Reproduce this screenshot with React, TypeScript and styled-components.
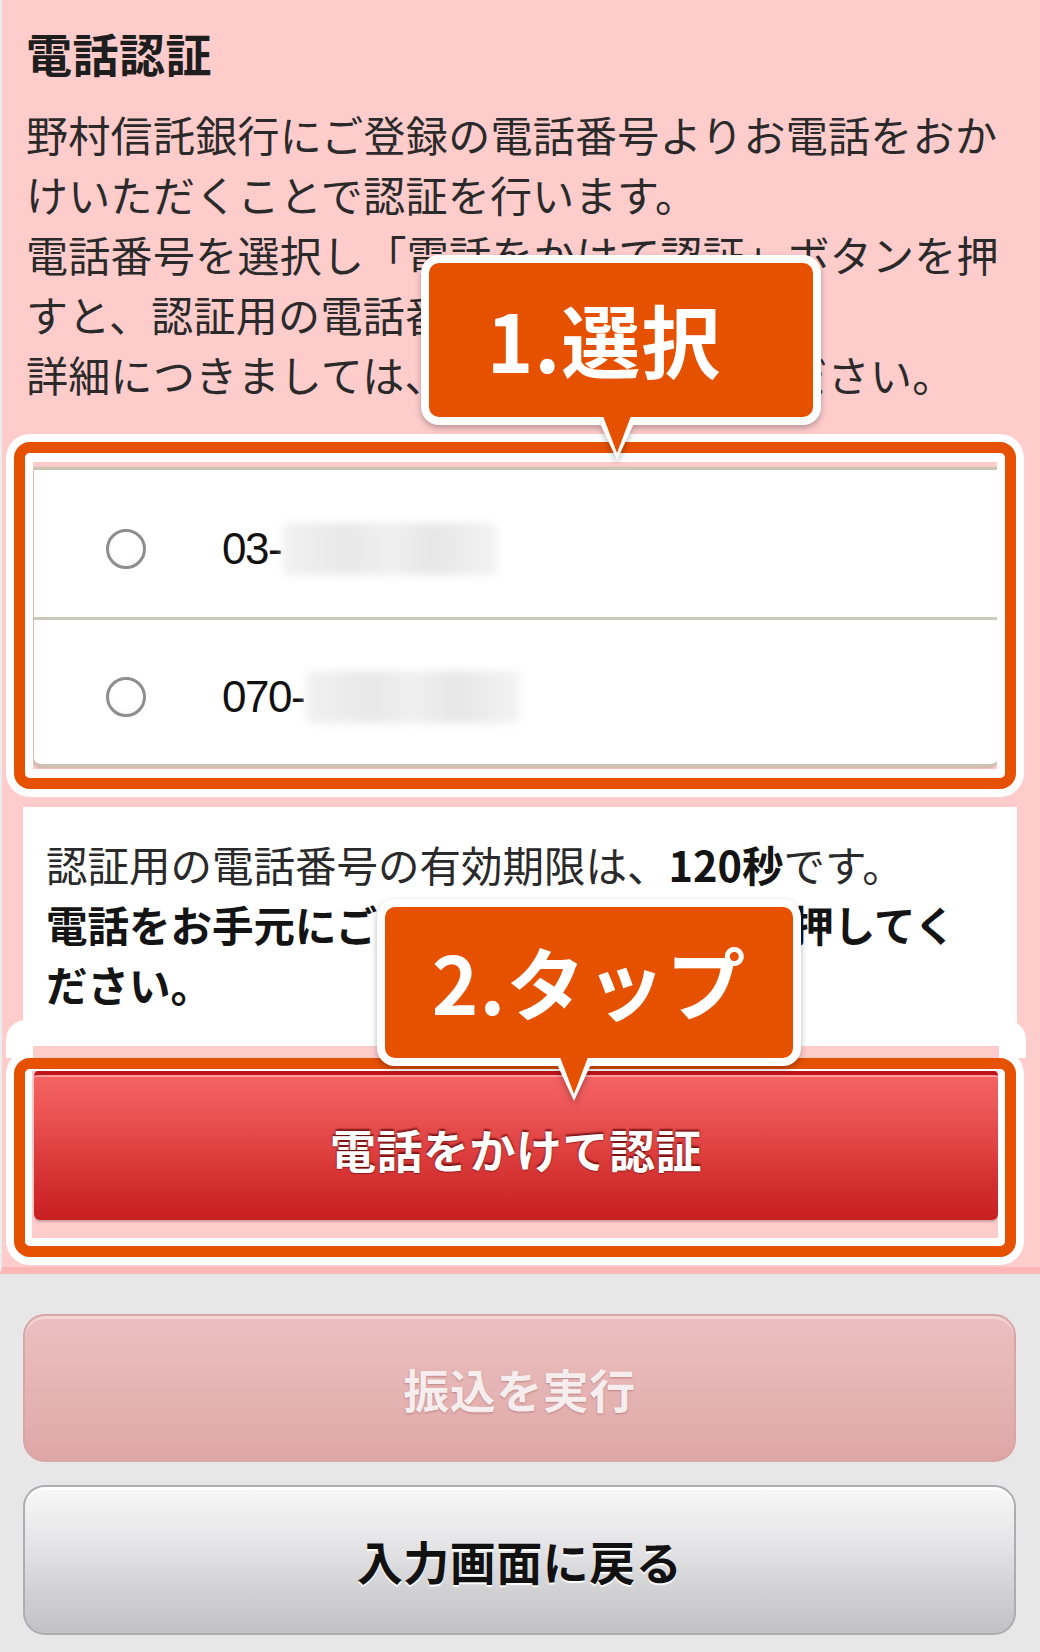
import styled, { createGlobalStyle } from 'styled-components';

const GlobalStyle = createGlobalStyle`
  html, body {
    margin: 0;
    padding: 0;
    background: #e7e7e7;
  }
  body {
    font-family: 'Noto Sans CJK JP', 'Noto Sans', sans-serif;
    color: #333;
  }
  * {
    box-sizing: border-box;
  }
`;

const ORANGE = '#e65100';
const PINK = '#ffcccc';

const Page = styled.div`
  position: relative;
  width: 1040px;
  height: 1652px;
  overflow: hidden;
  background: #e7e7e7;
`;

const AuthSection = styled.section`
  display: flex;
  flex-direction: column;
  align-items: flex-start;
  background: ${PINK};
  border-left: 2px solid #e9eded;
  border-bottom: 7px solid #ffb6b6;
  padding: 22px 0 47px;
`;

const Heading = styled.h2`
  margin: 0 0 0 24px;
  font-size: 46px;
  line-height: 60px;
  font-weight: 700;
  color: #1e1e1e;
  letter-spacing: 0.5px;
`;

const Description = styled.p`
  margin: 22px 0 0 24px;
  font-size: 42px;
  line-height: 60px;
  letter-spacing: 0.3px;
  white-space: nowrap;
  color: #2a2a2a;
`;

const PhoneList = styled.div`
  margin: 63px 0 0 32px;
  width: 964px;
  background: #fff;
  border-top: 3px solid #c9c5b3;
  border-bottom: 3px solid #c9c5b3;
  border-radius: 0 0 8px 8px;
  box-shadow: -1px 1px 3px rgba(0, 0, 0, 0.18);
`;

const PhoneRow = styled.label`
  display: flex;
  align-items: center;
  gap: 76px;
  height: 147px;
  padding: 10px 0 0 72px;
  & + & {
    border-top: 3px solid #cdc9b8;
  }
`;

const Radio = styled.span`
  flex: none;
  width: 40px;
  height: 40px;
  border-radius: 50%;
  border: 3px solid #8e8e8e;
  background: radial-gradient(circle at 50% 40%, #fff 55%, #f0f0f0 100%);
`;

const PhoneNumber = styled.span`
  display: flex;
  align-items: center;
  font-family: 'Liberation Sans', Arial, sans-serif;
  font-size: 44px;
  color: #111;
  letter-spacing: -1.5px;
`;

const Masked = styled.span<{ $width: number }>`
  display: inline-block;
  width: ${(p) => p.$width}px;
  height: 52px;
  margin-left: 2px;
  border-radius: 6px;
  background: linear-gradient(90deg, #f1f1f1 0%, #e8e8e8 30%, #f0f0f0 50%, #e6e6e6 70%, #f3f3f3 100%);
  filter: blur(4px);
`;

const InfoBox = styled.div`
  margin: 40px 0 0 21px;
  width: 994px;
  background: #fff;
  padding: 27px 0 29px 23px;
  font-size: 41.5px;
  line-height: 60px;
  white-space: nowrap;
  color: #2a2a2a;
  b {
    color: #141414;
    font-weight: 700;
  }
`;

type Variant = 'call' | 'disabled' | 'back';

const variants: Record<Variant, string> = {
  call: `
    width: 964px;
    height: 150px;
    margin: 27px 0 0 32px;
    border: none;
    border-top: 5px solid #bf1519;
    border-radius: 6px;
    background: linear-gradient(180deg, #f56464 0%, #ea5151 30%, #d83636 65%, #c71e21 100%);
    box-shadow: inset 0 2px 0 #ff9d9d, 0 2px 2px rgba(0, 0, 0, 0.2);
    color: #fff;
    text-shadow: 0 -2px 2px rgba(90, 0, 0, 0.75), 0 1px 1px rgba(90, 0, 0, 0.5);
  `,
  disabled: `
    width: 993px;
    height: 148px;
    border: 2px solid #d9a5a5;
    border-radius: 22px;
    background: linear-gradient(180deg, #ebc0c0 0%, #e6b4b4 50%, #dea7a7 100%);
    box-shadow: inset 0 3px 0 rgba(255, 255, 255, 0.35);
    color: #f6eeee;
    text-shadow: 0 1px 2px rgba(140, 70, 70, 0.45);
  `,
  back: `
    width: 993px;
    height: 150px;
    border: 2px solid #adadb1;
    border-radius: 22px;
    background: linear-gradient(180deg, #f8f8f8 0%, #e4e4e6 40%, #cfcfd2 75%, #c2c2c6 100%);
    box-shadow: inset 0 3px 0 #fff;
    color: #111;
    text-shadow: 0 2px 1px #fff;
  `,
};

const ActionButton = styled.button<{ $variant: Variant }>`
  display: flex;
  align-items: center;
  justify-content: center;
  padding: 0;
  font-family: 'Noto Sans CJK JP', sans-serif;
  font-size: 46px;
  font-weight: 700;
  line-height: 1;
  letter-spacing: 0.5px;
  ${(p) => variants[p.$variant]}
`;

const ActionArea = styled.section`
  display: flex;
  flex-direction: column;
  gap: 23px;
  padding: 40px 0 0 23px;
`;

/* annotation layer */

const Highlight = styled.div<{ $top: number; $height: number; $inner: string }>`
  position: absolute;
  z-index: 2;
  left: 14px;
  top: ${(p) => p.$top}px;
  width: 1002px;
  height: ${(p) => p.$height}px;
  border: 11px solid ${ORANGE};
  border-radius: 16px;
  box-shadow: 0 0 0 8px #fff;
  pointer-events: none;
  &::after {
    content: '';
    position: absolute;
    inset: 0;
    border-style: solid;
    border-color: #fff;
    border-width: ${(p) => p.$inner};
    border-radius: 5px;
  }
`;

const HighlightCap = styled.div`
  position: absolute;
  z-index: 3;
  left: 6px;
  top: 1020px;
  width: 1020px;
  height: 38px;
  display: flex;
  flex-direction: column;
`;

const CapTop = styled.div`
  flex: 1;
  background: #fff;
  border-radius: 20px 20px 0 0;
`;

const CapNeck = styled.div`
  display: flex;
  height: 12px;
`;

const NeckSide = styled.div`
  width: 27px;
  background: #fff;
`;

const NeckGap = styled.div`
  flex: 1;
  background: ${PINK};
`;

const Callout = styled.div<{
  $left: number;
  $top: number;
  $width: number;
  $height: number;
  $tip: number;
  $shift?: number;
}>`
  position: absolute;
  z-index: 4;
  left: ${(p) => p.$left}px;
  top: ${(p) => p.$top}px;
  width: ${(p) => p.$width}px;
  height: ${(p) => p.$height}px;
  display: flex;
  align-items: center;
  justify-content: center;
  background: ${ORANGE};
  border: 8px solid #fff;
  border-radius: 18px;
  filter: drop-shadow(0 3px 3px rgba(0, 0, 0, 0.28));
  color: #fff;
  font-size: 79px;
  font-weight: 700;
  line-height: 1;
  letter-spacing: 1px;
  padding: 0 ${(p) => p.$shift ?? 0}px 4px 0;
  &::before,
  &::after {
    content: '';
    position: absolute;
    width: 0;
    height: 0;
    border-style: solid;
    border-color: transparent;
  }
  &::before {
    top: calc(100% + 2px);
    left: ${(p) => p.$tip - 8 - 19}px;
    border-width: 41px 19px 0 19px;
    border-top-color: #fff;
  }
  &::after {
    top: calc(100% - 1px);
    left: ${(p) => p.$tip - 8 - 14}px;
    border-width: 37px 14px 0 14px;
    border-top-color: ${ORANGE};
  }
`;

export default function App() {
  return (
    <Page>
      <GlobalStyle />
      <AuthSection>
        <Heading>電話認証</Heading>
        <Description>
          野村信託銀行にご登録の電話番号よりお電話をおか
          <br />
          けいただくことで認証を行います。
          <br />
          電話番号を選択し「電話をかけて認証」ボタンを押
          <br />
          すと、認証用の電話番号が表示されます。
          <br />
          詳細につきましては、こちらをご確認ください。
        </Description>
        <PhoneList>
          <PhoneRow>
            <Radio />
            <PhoneNumber>
              03-
              <Masked $width={214} />
            </PhoneNumber>
          </PhoneRow>
          <PhoneRow>
            <Radio />
            <PhoneNumber>
              070-
              <Masked $width={214} />
            </PhoneNumber>
          </PhoneRow>
        </PhoneList>
        <InfoBox>
          認証用の電話番号の有効期限は、<b>120秒</b>です。
          <br />
          <b>電話をお手元にご用意のうえ、ボタンを押してく</b>
          <br />
          <b>ださい。</b>
        </InfoBox>
        <ActionButton $variant="call">電話をかけて認証</ActionButton>
      </AuthSection>
      <ActionArea>
        <ActionButton $variant="disabled" disabled>
          振込を実行
        </ActionButton>
        <ActionButton $variant="back">入力画面に戻る</ActionButton>
      </ActionArea>

      <Highlight $top={442} $height={347} $inner="9px 8px 9px 8px" />
      <Highlight $top={1058} $height={199} $inner="2px 7px 8px 7px" />
      <HighlightCap>
        <CapTop />
        <CapNeck>
          <NeckSide />
          <NeckGap />
          <NeckSide />
        </CapNeck>
      </HighlightCap>
      <Callout $left={421} $top={255} $width={400} $height={170} $tip={196} $shift={34}>
        1.選択
      </Callout>
      <Callout $left={377} $top={899} $width={424} $height={167} $tip={197}>
        2.タップ
      </Callout>
    </Page>
  );
}
